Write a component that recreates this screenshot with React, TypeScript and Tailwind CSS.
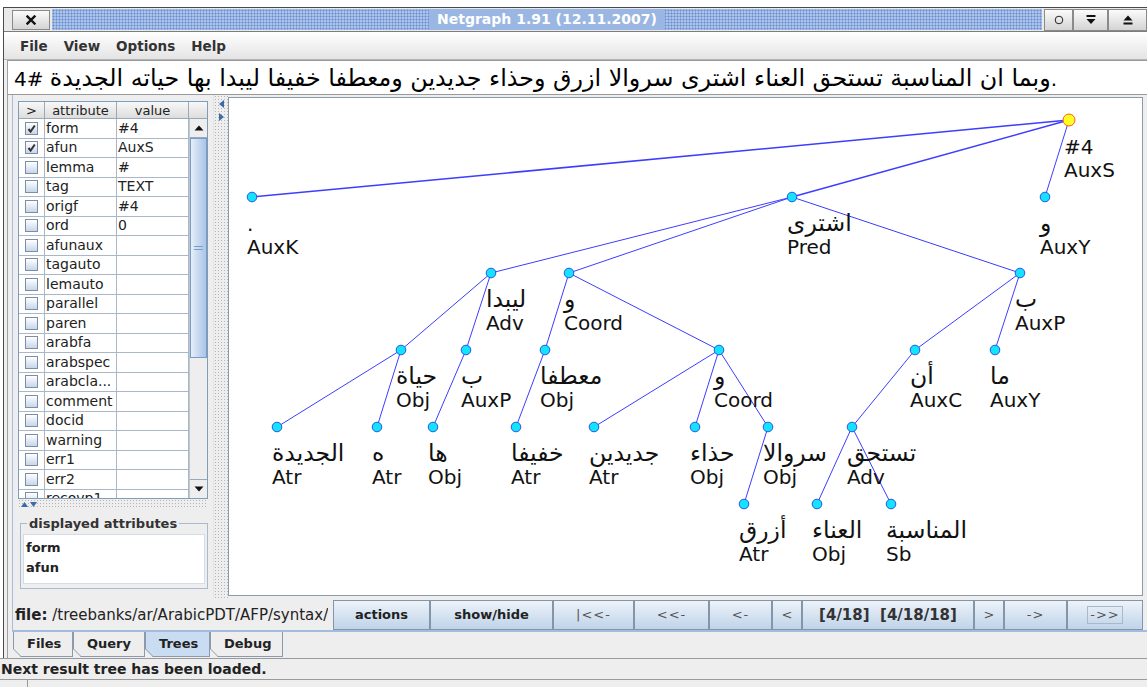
import React from 'react';

type TNode = { x: number; y: number; w: string; f: string; root?: boolean };

const N: Record<string, TNode> = {
  root: { x: 1069, y: 120, w: '#4', f: 'AuxS', root: true },
  auxk: { x: 252, y: 197, w: '.', f: 'AuxK' },
  pred: { x: 792, y: 197, w: 'اشترى', f: 'Pred' },
  auxy: { x: 1045, y: 197, w: 'و', f: 'AuxY' },
  adv: { x: 491, y: 273, w: 'ليبدا', f: 'Adv' },
  coord: { x: 569, y: 273, w: 'و', f: 'Coord' },
  auxp: { x: 1020, y: 273, w: 'ب', f: 'AuxP' },
  haya: { x: 401, y: 350, w: 'حياة', f: 'Obj' },
  bi: { x: 466, y: 350, w: 'ب', f: 'AuxP' },
  muataf: { x: 545, y: 350, w: 'معطفا', f: 'Obj' },
  coord2: { x: 719, y: 350, w: 'و', f: 'Coord' },
  an: { x: 915, y: 350, w: 'أن', f: 'AuxC' },
  ma: { x: 995, y: 350, w: 'ما', f: 'AuxY' },
  jadida: { x: 277, y: 427, w: 'الجديدة', f: 'Atr' },
  h: { x: 377, y: 427, w: 'ه', f: 'Atr' },
  ha: { x: 433, y: 427, w: 'ها', f: 'Obj' },
  khafif: { x: 516, y: 427, w: 'خفيفا', f: 'Atr' },
  jadidayn: { x: 594, y: 427, w: 'جديدين', f: 'Atr' },
  hidha: { x: 695, y: 427, w: 'حذاء', f: 'Obj' },
  sirwal: { x: 768, y: 427, w: 'سروالا', f: 'Obj' },
  tastahiq: { x: 852, y: 427, w: 'تستحق', f: 'Adv' },
  azraq: { x: 744, y: 504, w: 'أزرق', f: 'Atr' },
  anaa: { x: 817, y: 504, w: 'العناء', f: 'Obj' },
  munasaba: { x: 891, y: 504, w: 'المناسبة', f: 'Sb' },
};

const E: [string, string][] = [
  ['root', 'auxk'], ['root', 'pred'], ['root', 'auxy'],
  ['pred', 'adv'], ['pred', 'coord'], ['pred', 'auxp'],
  ['adv', 'haya'], ['adv', 'bi'],
  ['coord', 'muataf'], ['coord', 'coord2'],
  ['auxp', 'an'], ['auxp', 'ma'],
  ['haya', 'jadida'], ['haya', 'h'],
  ['bi', 'ha'],
  ['muataf', 'khafif'],
  ['coord2', 'jadidayn'], ['coord2', 'hidha'], ['coord2', 'sirwal'],
  ['an', 'tastahiq'],
  ['sirwal', 'azraq'],
  ['tastahiq', 'anaa'], ['tastahiq', 'munasaba'],
];

const ROWS: [string, string, boolean][] = [
  ['form', '#4', true], ['afun', 'AuxS', true], ['lemma', '#', false], ['tag', 'TEXT', false],
  ['origf', '#4', false], ['ord', '0', false], ['afunaux', '', false], ['tagauto', '', false],
  ['lemauto', '', false], ['parallel', '', false], ['paren', '', false], ['arabfa', '', false],
  ['arabspec', '', false], ['arabcla...', '', false], ['comment', '', false], ['docid', '', false],
  ['warning', '', false], ['err1', '', false], ['err2', '', false], ['recovp1', '', false],
];

const BTNS: { t: string; c: string; focus?: boolean }[] = [
  { t: 'actions', c: 'w-[97px] font-bold text-[13px] text-[#222]' },
  { t: 'show/hide', c: 'w-[123px] font-bold text-[13px] text-[#222]' },
  { t: '|<<-', c: 'w-[81px] tracking-[1px] text-[13px] text-[#555]' },
  { t: '<<-', c: 'w-[75px] tracking-[1px] text-[13px] text-[#555]' },
  { t: '<-', c: 'w-[63px] tracking-[1px] text-[13px] text-[#555]' },
  { t: '<', c: 'w-[30px] text-[13px] text-[#555]' },
  { t: '[4/18]  [4/18/18]', c: 'w-[172px] text-[15px] font-bold text-[#333]' },
  { t: '>', c: 'w-[30px] text-[13px] text-[#555]' },
  { t: '->', c: 'w-[63px] tracking-[1px] text-[13px] text-[#555]' },
  { t: '->>', c: 'w-[76px] tracking-[1px] text-[13px] text-[#555]', focus: true },
];

const TABS: { t: string; c: string; sel?: boolean }[] = [
  { t: 'Files', c: 'w-[60px]' },
  { t: 'Query', c: 'w-[72px]' },
  { t: 'Trees', c: 'w-[65px]', sel: true },
  { t: 'Debug', c: 'w-[73px]' },
];

const isArabic = (s: string) => /[\u0600-\u06FF]/.test(s);

function TitleBar() {
  return (
    <div className="h-[24px] flex items-center bg-[#e9e9e9] border-b border-[#7d7d7d]">
      <div className="ml-[8px] w-[38px] h-[20px] border border-[#8a8a8a] bg-gradient-to-b from-[#fbfbfb] to-[#d4d4d4] flex items-center justify-center">
        <svg width="10" height="10" viewBox="0 0 10 10">
          <path d="M1.5 1.5 L8.5 8.5 M8.5 1.5 L1.5 8.5" stroke="#111" strokeWidth="2.4" strokeLinecap="square" />
        </svg>
      </div>
      <div className="flex-1 h-[21px] mx-[2px] flex items-center justify-center bg-[#a9c3ea] bg-[radial-gradient(circle,#6a8bcc_0.9px,transparent_1.1px)] bg-[length:3px_3px]">
        <span className="px-[8px] h-[21px] flex items-center bg-[#9ab6e2] text-white font-bold text-[14px]">Netgraph 1.91 (12.11.2007)</span>
      </div>
      <div className="w-[29px] h-[22px] border border-[#8a8a8a] bg-gradient-to-b from-[#fbfbfb] to-[#d4d4d4] flex items-center justify-center">
        <svg width="10" height="10" viewBox="0 0 10 10"><circle cx="5" cy="5" r="3.8" fill="none" stroke="#222" strokeWidth="1" /></svg>
      </div>
      <div className="w-[35px] h-[22px] border border-[#8a8a8a] bg-gradient-to-b from-[#fbfbfb] to-[#d4d4d4] flex items-center justify-center">
        <svg width="12" height="12" viewBox="0 0 12 12"><rect x="1.5" y="1" width="9" height="2" fill="#111" /><path d="M1.5 5 H10.5 L6 10 Z" fill="#111" /></svg>
      </div>
      <div className="w-[39px] h-[22px] border border-[#8a8a8a] bg-gradient-to-b from-[#fbfbfb] to-[#d4d4d4] flex items-center justify-center">
        <svg width="12" height="12" viewBox="0 0 12 12"><path d="M6 1.5 L10.5 6.5 H1.5 Z" fill="#111" /><rect x="1.5" y="8.5" width="9" height="2" fill="#111" /></svg>
      </div>
    </div>
  );
}

function MenuBar() {
  return (
    <div className="h-[28px] flex items-center gap-[16px] pl-[16px] pt-[1px] bg-gradient-to-b from-[#ffffff] to-[#e4e4e4] border-b border-[#b5b5b5] text-[13.5px] font-bold text-[#333]">
      <span>File</span>
      <span>View</span>
      <span>Options</span>
      <span>Help</span>
    </div>
  );
}

function CheckBox({ on }: { on: boolean }) {
  return (
    <div className="w-[13px] h-[13px] border border-[#7d8ea3] bg-gradient-to-b from-[#ffffff] to-[#c6d6ea] flex items-center justify-center">
      {on && (
        <svg width="11" height="11" viewBox="0 0 11 11">
          <path d="M2.5 6 L4.6 8.6 L8.8 2.5" fill="none" stroke="#333" strokeWidth="2" />
        </svg>
      )}
    </div>
  );
}

function Scrollbar() {
  return (
    <div className="w-[18px] flex flex-col bg-[#eeeeee] border-l border-[#b9c6d4]">
      <div className="h-[19px] border-b border-[#9aa8b8] bg-[#eeeeee] flex items-center justify-center">
        <svg width="10" height="6" viewBox="0 0 10 6"><path d="M5 0.5 L9.5 5.5 H0.5 Z" fill="#111" /></svg>
      </div>
      <div className="h-[220px] border border-[#7d9bc6] bg-gradient-to-r from-[#e6eff9] via-[#c6d9ef] to-[#a9c5e8] flex items-center justify-center">
        <div className="w-[9px] flex flex-col gap-[2px]">
          <div className="h-px bg-[#7d9bc6]" />
          <div className="h-px bg-[#7d9bc6]" />
        </div>
      </div>
      <div className="flex-1" />
      <div className="h-[19px] border-t border-[#9aa8b8] bg-[#eeeeee] flex items-center justify-center">
        <svg width="10" height="6" viewBox="0 0 10 6"><path d="M0.5 0.5 H9.5 L5 5.5 Z" fill="#111" /></svg>
      </div>
    </div>
  );
}

function LeftPanel() {
  return (
    <div className="w-[200px] flex flex-col pl-[5px] pt-[6px]">
      <div className="w-[190px] h-[398px] border border-[#7f9db9] bg-white flex flex-col text-[#222]">
        <div className="h-[17px] flex leading-none border-b border-[#9aa8b8] text-[13px]">
          <div className="w-[26px] border-r border-[#9aa8b8] bg-gradient-to-b from-[#f8f8f8] to-[#dddddd] flex items-center justify-center">&gt;</div>
          <div className="w-[72px] border-r border-[#9aa8b8] bg-gradient-to-b from-[#f8f8f8] to-[#dddddd] flex items-center justify-center">attribute</div>
          <div className="w-[72px] border-r border-[#9aa8b8] bg-gradient-to-b from-[#f8f8f8] to-[#dddddd] flex items-center justify-center">value</div>
          <div className="flex-1 bg-gradient-to-b from-[#f8f8f8] to-[#dddddd]" />
        </div>
        <div className="flex-1 flex overflow-hidden text-[14px]">
          <div className="w-[170px] overflow-hidden">
            {ROWS.map(([a, v, on]) => (
              <div key={a} className="h-[19.5px] flex border-b border-[#a9b7c6]">
                <div className="w-[26px] border-r border-[#a9b7c6] flex items-center justify-center">
                  <CheckBox on={on} />
                </div>
                <div className="w-[72px] border-r border-[#a9b7c6] pl-[1px] flex items-center whitespace-nowrap overflow-hidden">{a}</div>
                <div className="w-[72px] border-r border-[#a9b7c6] pl-[1px] flex items-center whitespace-nowrap overflow-hidden">{v}</div>
              </div>
            ))}
          </div>
          <Scrollbar />
        </div>
      </div>
      <div className="w-[190px] h-[10px] flex items-center gap-[2px] pl-[3px] bg-[#eeeeee] bg-[radial-gradient(circle,#b4b4b4_0.7px,transparent_0.9px)] bg-[length:3px_3px]">
        <svg width="7" height="5" viewBox="0 0 7 5"><path d="M3.5 0 L7 5 H0 Z" fill="#3e6aa8" /></svg>
        <svg width="7" height="5" viewBox="0 0 7 5"><path d="M0 0 H7 L3.5 5 Z" fill="#3e6aa8" /></svg>
      </div>
      <fieldset className="w-[188px] ml-[2px] mt-[5px] border border-[#a8bad0] px-[2px] pb-[4px]">
        <legend className="ml-[4px] px-[2px] text-[13px] font-bold text-[#333]">displayed attributes</legend>
        <div className="h-[50px] bg-white border border-[#d3dde8] pl-[2px] pt-[3px] text-[13px] font-bold leading-[20px] text-[#222]">
          <div>form</div>
          <div>afun</div>
        </div>
      </fieldset>
    </div>
  );
}

function VDivider() {
  return (
    <div className="w-[15px] flex flex-col items-center pt-[5px] gap-[5px] border-l border-[#dfe5ec] bg-[#eeeeee] bg-[radial-gradient(circle,#b4b4b4_0.7px,transparent_0.9px)] bg-[length:3px_3px]">
      <svg width="5" height="8" viewBox="0 0 5 8"><path d="M5 0 V8 L0 4 Z" fill="#3e6aa8" /></svg>
      <svg width="5" height="8" viewBox="0 0 5 8"><path d="M0 0 V8 L5 4 Z" fill="#3e6aa8" /></svg>
    </div>
  );
}

function Canvas() {
  return (
    <div className="w-[915px] h-[499px] bg-white border border-[#8d9aa8]">
      <svg width="913" height="497" viewBox="229 98 913 497" className="block">
        {E.map(([p, c]) => {
          const a = N[p];
          const b = N[c];
          const thick = p === 'root' && c !== 'auxy';
          return (
            <line key={p + c} x1={a.x} y1={a.y} x2={b.x} y2={b.y} stroke="#3d3dff" strokeWidth={thick ? 1.5 : 1} />
          );
        })}
        {Object.entries(N).map(([k, n]) => (
          <g key={k}>
            <circle cx={n.x} cy={n.y} r={n.root ? 6 : 4.8} fill={n.root ? '#ffff22' : '#12e4ff'} stroke={n.root ? '#ff5a1f' : '#2a55e0'} strokeWidth="1" />
            <text x={n.x - 5} y={n.y + 34} fontSize={isArabic(n.w) ? 23.5 : 20} fill="#111" fontFamily="DejaVu Sans">{n.w}</text>
            <text x={n.x - 5} y={n.y + 57} fontSize="20" fill="#111" fontFamily="DejaVu Sans">{n.f}</text>
          </g>
        ))}
      </svg>
    </div>
  );
}

function Toolbar() {
  return (
    <div className="h-[34px] flex items-start pt-[2px] border-b-2 border-[#a3bcdc]">
      <div className="w-[320px] h-[30px] flex items-center">
        <div className="w-[315px] pl-[2px] overflow-hidden whitespace-nowrap text-[15px] text-[#222]">
          <b>file:</b>&nbsp;/treebanks/ar/ArabicPDT/AFP/syntax/
        </div>
      </div>
      {BTNS.map((b) => (
        <div key={b.t} className={'h-[30px] flex items-center justify-center border border-[#8395a8] bg-gradient-to-b from-[#edf3f9] to-[#bfd3e9] whitespace-pre ' + b.c}>
          {b.focus ? <span className="border border-[#a9b9cb] px-[2px] leading-[16px]">{b.t}</span> : b.t}
        </div>
      ))}
    </div>
  );
}

function Tabs() {
  return (
    <div className="h-[26px] flex pl-[5px]">
      {TABS.map((t) => (
        <div key={t.t} className={'relative h-[25px] flex items-center pl-[14px] border-r border-b border-[#8c9aab] text-[13px] font-bold text-[#222] ' + t.c + (t.sel ? ' bg-[#c9dcf1]' : ' bg-[#eeeeee]')}>
          <svg className="absolute left-0 top-0" width="9" height="26" viewBox="0 0 9 26">
            <path d="M0 17 L8 25 L0 25 Z" fill="#eeeeee" />
            <path d="M0.5 0 V17 L8.5 25" fill="none" stroke="#8c9aab" strokeWidth="1" />
          </svg>
          {t.t}
        </div>
      ))}
    </div>
  );
}

export default function App() {
  return (
    <div className="w-[1147px] h-[687px] bg-white overflow-hidden font-['DejaVu_Sans',sans-serif] text-[#222]">
      <div className="ml-[3px] mt-[7px] w-[1144px] h-[651px] border-l border-t border-[#4a4a4a] bg-[#eeeeee] flex flex-col">
        <TitleBar />
        <MenuBar />
        <div className="flex-1 ml-[3px] border-l border-[#a0a0a0] flex flex-col">
          <div className="h-[35px] bg-white border-t border-b border-[#9a9a9a] flex items-center pl-[6px] pt-[2px] text-[20px] text-black whitespace-nowrap overflow-hidden">
            <span>
              <span className="text-[23.8px]">وبما ان المناسبة تستحق العناء اشترى سروالا ازرق وحذاء جديدين ومعطفا خفيفا ليبدا بها حياته الجديدة</span> #4.
            </span>
          </div>
          <div className="ml-[4px] border-l border-[#a8bfdc] flex flex-col">
            <div className="h-[503px] flex">
              <LeftPanel />
              <VDivider />
              <div className="pt-[2px]">
                <Canvas />
              </div>
            </div>
            <Toolbar />
          </div>
          <Tabs />
        </div>
      </div>
      <div className="h-[22px] border-t border-b border-[#9a9a9a] bg-[#eeeeee] flex items-center pl-[1px] text-[14px] font-bold text-[#222]">
        Next result tree has been loaded.
      </div>
      <div className="h-[7px] flex bg-[#eeeeee]">
        <div className="w-[28px] border-r border-[#9a9a9a]" />
      </div>
    </div>
  );
}
